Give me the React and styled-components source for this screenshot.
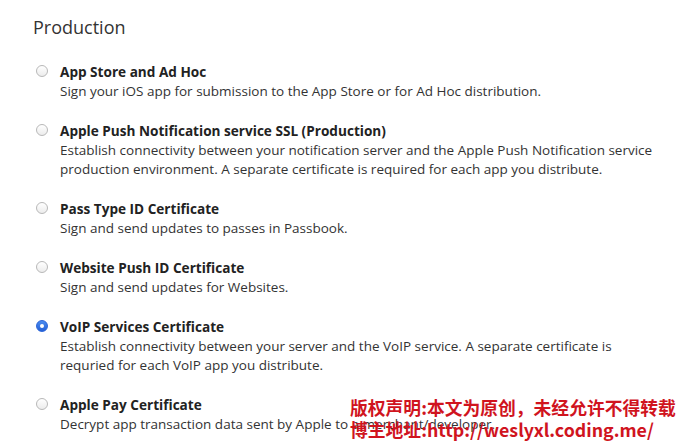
import React from 'react'
import styled, { createGlobalStyle } from 'styled-components'

const Global = createGlobalStyle`
    body {
        margin: 0;
        background: #fff;
        font-family: 'Open Sans', 'Liberation Sans', sans-serif;
        color: #333;
    }
`

const Page = styled.div`
    position: relative;
    width: 677px;
    height: 444px;
    overflow: hidden;
    padding: 16px 0 0 33px;
    box-sizing: border-box;
`

const Heading = styled.h2`
    margin: 0 0 23px;
    font-size: 18px;
    font-weight: 400;
    line-height: 22px;
    color: #333;
`

const List = styled.div`
    display: flex;
    flex-direction: column;
    gap: 19px;
`

const Option = styled.label`
    display: flex;
    gap: 12px;
`

const Radio = styled.span`
    flex: none;
    width: 12px;
    height: 12px;
    margin: 4px 0 0 3px;
    border-radius: 50%;
    box-sizing: border-box;
    display: flex;
    align-items: center;
    justify-content: center;
    border: 1px solid ${p => (p.checked ? '#2a64d8' : '#b8b8b8')};
    background: ${p => (p.checked
        ? 'linear-gradient(#4a8cf0, #2460d6)'
        : 'linear-gradient(#fff, #ececec)')};

    &::after {
        content: '';
        display: ${p => (p.checked ? 'block' : 'none')};
        width: 4px;
        height: 4px;
        border-radius: 50%;
        background: #fff;
    }
`

const Body = styled.div`
    display: flex;
    flex-direction: column;
`

const Title = styled.div`
    font-size: 13.6px;
    font-weight: 700;
    line-height: 21px;
    color: #222;
`

const Desc = styled.div`
    font-size: 13.5px;
    line-height: 19px;
    color: #333;
    max-width: 600px;
`

const Watermark = styled.div`
    position: absolute;
    left: 350px;
    top: 396px;
    font-family: 'Noto Sans CJK SC', 'Liberation Serif', serif;
    font-weight: 700;
    font-size: 17.8px;
    line-height: 22px;
    color: #d0141e;
    white-space: nowrap;
`

const options = [
    { title: 'App Store and Ad Hoc', desc: 'Sign your iOS app for submission to the App Store or for Ad Hoc distribution.' },
    { title: 'Apple Push Notification service SSL (Production)', desc: 'Establish connectivity between your notification server and the Apple Push Notification service production environment. A separate certificate is required for each app you distribute.' },
    { title: 'Pass Type ID Certificate', desc: 'Sign and send updates to passes in Passbook.' },
    { title: 'Website Push ID Certificate', desc: 'Sign and send updates for Websites.' },
    { title: 'VoIP Services Certificate', desc: 'Establish connectivity between your server and the VoIP service. A separate certificate is requried for each VoIP app you distribute.', checked: true },
    { title: 'Apple Pay Certificate', desc: 'Decrypt app transaction data sent by Apple to a merchant/developer.' },
]

export default function App() {
    return (
        <Page>
            <Global />
            <Heading>Production</Heading>
            <List>
                {options.map(o => (
                    <Option key={o.title}>
                        <Radio checked={o.checked} />
                        <Body>
                            <Title>{o.title}</Title>
                            <Desc>{o.desc}</Desc>
                        </Body>
                    </Option>
                ))}
            </List>
            <Watermark>
                版权声明:本文为原创，未经允许不得转载<br />
                博主地址:http://weslyxl.coding.me/
            </Watermark>
        </Page>
    )
}
